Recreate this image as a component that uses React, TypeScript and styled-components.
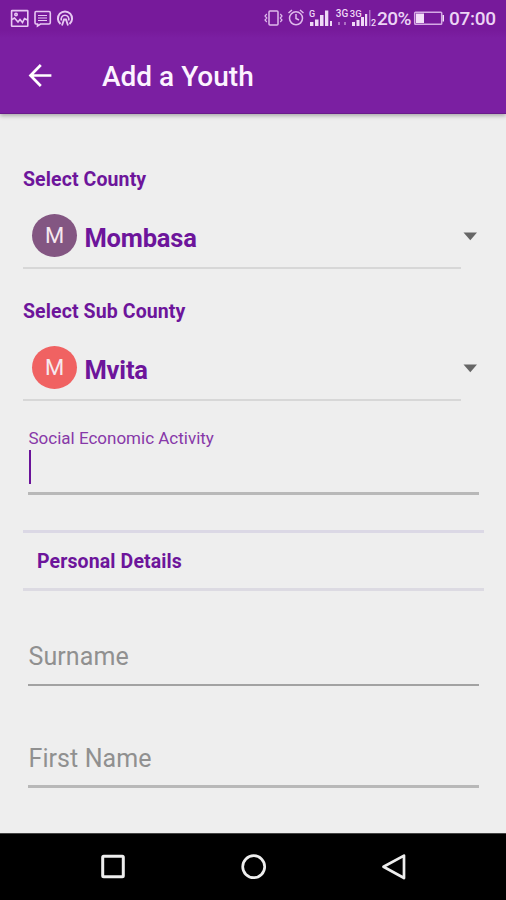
import React from "react";
import styled, { createGlobalStyle } from "styled-components";

const GlobalStyle = createGlobalStyle`
  body { margin: 0; background: #eeeeee; }
  * { box-sizing: border-box; }
`;

const Screen = styled.div`
  width: 506px;
  height: 900px;
  display: flex;
  flex-direction: column;
  overflow: hidden;
  background: #eeeeee;
  font-family: Roboto, "Liberation Sans", sans-serif;
  color: #6d159b;
`;

const Header = styled.header`
  flex: none;
  height: 114px;
  background: #7b1fa2;
  border-bottom: 1px solid #691a8b;
  box-shadow: 0 2px 4px rgba(0, 0, 0, 0.28);
`;

const StatusBar = styled.div`
  height: 38px;
  display: flex;
  justify-content: space-between;
  padding: 0 10px 0 9px;
  background: linear-gradient(#771a9b 80%, #7b1fa2);
  color: #ecd4f5;
`;

const StatusGroup = styled.div`
  display: flex;
  align-items: center;
  height: 38px;
`;

const StatusText = styled.span<{ $width: number; $spacing?: number }>`
  width: ${(p) => p.$width}px;
  font-size: 19px;
  line-height: 38px;
  font-weight: 500;
  letter-spacing: ${(p) => p.$spacing ?? 0}px;
  white-space: nowrap;
`;

const Toolbar = styled.div`
  height: 75px;
  display: flex;
  align-items: center;
  padding-left: 28px;
`;

const Title = styled.h1`
  margin: 2px 0 0 50px;
  font-size: 28px;
  line-height: 36px;
  font-weight: 500;
  color: #fcf3ff;
`;

const Form = styled.main`
  flex: none;
  height: 719px;
  padding: 52px 22px 0 23px;
`;

const Picker = styled.section`
  height: 132px;
`;

const Label = styled.div`
  font-size: 19.5px;
  line-height: 27px;
  height: 26px;
  font-weight: 700;
  letter-spacing: 0.11px;
  white-space: nowrap;
`;

const Select = styled.div`
  display: flex;
  align-items: center;
  height: 45px;
  margin-top: 21px;
  padding: 0 6px 0 9px;
`;

const Avatar = styled.span<{ $color: string }>`
  width: 45px;
  height: 43px;
  border-radius: 50%;
  background: ${(p) => p.$color};
  color: #f6e9ef;
  font-size: 22px;
  line-height: 43px;
  text-align: center;
`;

const Value = styled.span`
  flex: 1;
  padding: 4px 0 0 7.5px;
  font-size: 25.5px;
  line-height: 42px;
  font-weight: 700;
  letter-spacing: -0.2px;
`;

const PickerLine = styled.div`
  width: 438px;
  height: 2px;
  margin-top: 9px;
  background: #d7d7d7;
`;

const Activity = styled.section`
  height: 98px;
  margin: -2px 5px 0;
`;

const FloatingLabel = styled.div`
  height: 24px;
  padding-left: 0.5px;
  font-size: 17px;
  line-height: 20px;
  color: #8738a8;
`;

const Caret = styled.div`
  width: 2px;
  height: 34px;
  margin: -2px 0 0 1px;
  background: #6a1299;
`;

const FieldLine = styled.div<{ $gap: number; $height: number; $color: string }>`
  height: ${(p) => p.$height}px;
  margin-top: ${(p) => p.$gap}px;
  background: ${(p) => p.$color};
`;

const SectionTitle = styled.h2`
  height: 61px;
  margin: 4px 0 0;
  padding-left: 14px;
  border-top: 3px solid #dbd8e5;
  border-bottom: 3px solid #dcdae2;
  font-size: 19.5px;
  line-height: 57px;
  font-weight: 700;
  letter-spacing: 0.12px;
`;

const Field = styled.section<{ $top: number }>`
  margin: ${(p) => p.$top}px 5px 0;
`;

const Placeholder = styled.div`
  height: 32px;
  padding-left: 0.5px;
  font-size: 25px;
  line-height: 32px;
  letter-spacing: 0.08px;
  color: #909090;
`;

const NavBar = styled.nav`
  flex: none;
  height: 67px;
  display: flex;
  justify-content: space-between;
  padding: 19px 97px 0 98px;
  background: #000;
  border-top: 1px solid #444;
`;

function LeftStatusIcons() {
  return (
    <svg width="70" height="38" viewBox="9 0 70 38" fill="none" stroke="#e8c9f3" strokeWidth="1.6">
      <rect x="11.6" y="10.6" width="16.2" height="15.6" rx="0.5" />
      <path d="M12 19.5 L14.5 18 L18 22 L20 19.5 L22.5 22.5 L24.5 18.5 L27.5 20" />
      <circle cx="16" cy="14.5" r="1.2" />
      <path d="M36 11.5 H49 Q50.3 11.5 50.3 13 V22.5 Q50.3 24 49 24 H40.5 L37.5 26 V24 H36 Q35 24 35 22.5 V13 Q35 11.5 36 11.5 Z" />
      <path d="M38 15.5 H47 M38 18 H47 M38 20.5 H47" strokeWidth="1.2" />
      <path d="M60.5 24 A7.1 7.1 0 1 1 69.5 24" strokeWidth="2" />
      <path d="M61.5 20.5 A3.8 3.8 0 1 1 68.5 20.5" />
      <path d="M62 25.5 L64 19.5 H66 L68 25.5" strokeWidth="1.8" />
    </svg>
  );
}

function RightStatusIcons() {
  return (
    <svg width="114" height="38" viewBox="263 0 114 38" fill="none" stroke="#dfbaec" strokeWidth="1.5">
      <rect x="269" y="11" width="9" height="14" rx="1" />
      <path d="M266.8 14 L265 16 L266.8 18 L265 20 L266.8 22 M280.3 14 L282 16 L280.3 18 L282 20 L280.3 22" strokeWidth="1.2" />
      <circle cx="296" cy="18.3" r="6.5" />
      <path d="M296 14 V18.5 L299 20 M288.5 13 L292 10 M300 10 L303.5 13" />
      <g fill="#efd9f6" stroke="none">
        <rect x="310" y="22" width="3.4" height="4" />
        <rect x="315" y="19.5" width="3.5" height="6.5" />
        <rect x="320" y="15" width="3.5" height="11" />
        <rect x="325" y="10.5" width="3.3" height="15.5" />
        <rect x="330" y="21" width="2" height="5" />
        <rect x="352" y="22" width="3" height="4" />
        <rect x="356.5" y="20" width="3" height="6" />
        <rect x="361" y="17" width="3" height="9" />
        <rect x="365" y="14" width="2.2" height="12" />
        <path opacity=".45" d="M338 22h2v3h-2z M344 22h2v3h-2z M369 10h1.5v16H369z" />
      </g>
      <g fill="#efd9f6" stroke="none" fontFamily="Roboto, sans-serif" fontWeight="500">
        <text x="309" y="16.8" fontSize="9">G</text>
        <text x="335.8" y="17.3" fontSize="10">3G</text>
        <text x="349.8" y="16.8" fontSize="9.5">3G</text>
        <text x="371" y="26" fontSize="9">2</text>
      </g>
    </svg>
  );
}

function Battery() {
  return (
    <svg width="36" height="38" viewBox="413 0 36 38" fill="none">
      <rect x="414.7" y="12.2" width="27" height="12" rx="0.8" stroke="#d5aae5" strokeWidth="1.5" />
      <path d="M416 13.5h8v9.5h-8z M442.5 15h1.5v6.5h-1.5z" fill="#f2e0f8" />
    </svg>
  );
}

function BackArrow() {
  return (
    <svg width="24" height="24" viewBox="0 0 24 24" fill="none" stroke="#fff" strokeWidth="2.7">
      <path d="M23.4 11.5 H3 M12.8 1 L2.5 11.5 L12.8 22" />
    </svg>
  );
}

function CountyPicker({ label, value, color }: { label: string; value: string; color: string }) {
  return (
    <Picker>
      <Label>{label}</Label>
      <Select>
        <Avatar $color={color}>{value[0]}</Avatar>
        <Value>{value}</Value>
        <svg width="15" height="10" viewBox="0 0 15 10">
          <path d="M0.5 1.5 H14 L7.3 9.3 Z" fill="#666" />
        </svg>
      </Select>
      <PickerLine />
    </Picker>
  );
}

export default function App() {
  return (
    <>
      <GlobalStyle />
      <Screen>
        <Header>
          <StatusBar>
            <StatusGroup>
              <LeftStatusIcons />
            </StatusGroup>
            <StatusGroup>
              <RightStatusIcons />
              <StatusText $width={36} $spacing={-0.6}>20%</StatusText>
              <Battery />
              <StatusText $width={47} $spacing={-0.3}>07:00</StatusText>
            </StatusGroup>
          </StatusBar>
          <Toolbar>
            <BackArrow />
            <Title>Add a Youth</Title>
          </Toolbar>
        </Header>
        <Form>
          <CountyPicker label="Select County" value="Mombasa" color="#835682" />
          <CountyPicker label="Select Sub County" value="Mvita" color="#f06262" />
          <Activity>
            <FloatingLabel>Social Economic Activity</FloatingLabel>
            <Caret />
            <FieldLine $gap={8} $height={3} $color="#b8b8b8" />
          </Activity>
          <SectionTitle>Personal Details</SectionTitle>
          <Field $top={50}>
            <Placeholder>Surname</Placeholder>
            <FieldLine $gap={11} $height={2} $color="#a2a2a2" />
          </Field>
          <Field $top={57}>
            <Placeholder>First Name</Placeholder>
            <FieldLine $gap={10} $height={3} $color="#b8b8b8" />
          </Field>
        </Form>
        <NavBar>
          <svg width="30" height="30" viewBox="0 0 30 30" fill="none" stroke="#eee" strokeWidth="3">
            <rect x="4.7" y="3.2" width="20.6" height="20.6" rx="1" />
          </svg>
          <svg width="30" height="30" viewBox="0 0 30 30" fill="none" stroke="#eee" strokeWidth="2.7">
            <circle cx="14.7" cy="13.7" r="11" />
          </svg>
          <svg width="30" height="30" viewBox="0 0 30 30" fill="none" stroke="#eee" strokeWidth="2.7" strokeLinejoin="round">
            <path d="M25 2.6 L4.5 13.8 L25 25 Z" />
          </svg>
        </NavBar>
      </Screen>
    </>
  );
}
